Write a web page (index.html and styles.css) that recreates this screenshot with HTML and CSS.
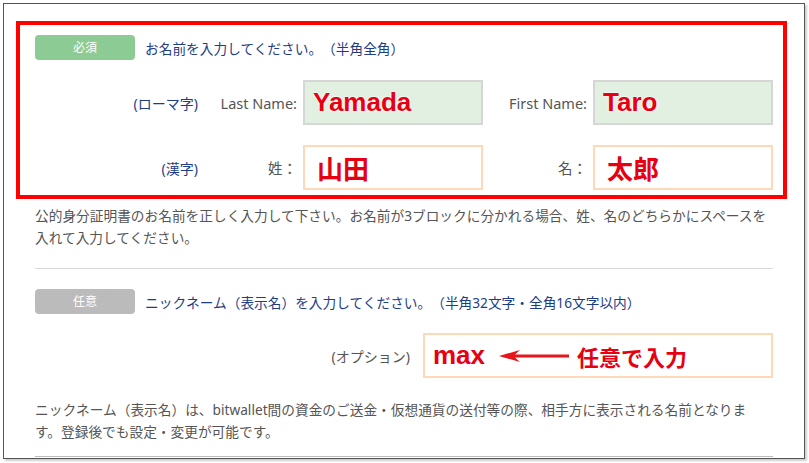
FILE: index.html
```html
<!DOCTYPE html>
<html lang="ja">
<head>
    <meta charset="UTF-8">
    <title>お名前の入力</title>
    <link rel="stylesheet" href="styles.css">
</head>
<body>

    <div class="form-panel">

        <!-- Required: name -->
        <div class="required-box">
            <div class="field-head">
                <span class="badge badge-required">必須</span>
                <span class="field-title">お名前を入力してください。（半角全角）</span>
            </div>

            <div class="name-grid">
                <div class="label label-note">(ローマ字)</div>
                <div class="label label-name">Last Name:</div>
                <div class="input input-roman"><span class="value value-latin">Yamada</span></div>
                <div class="label label-name">First Name:</div>
                <div class="input input-roman"><span class="value value-latin">Taro</span></div>

                <div class="label label-note">(漢字)</div>
                <div class="label label-name">姓：</div>
                <div class="input input-kanji"><span class="value value-kanji">山田</span></div>
                <div class="label label-name">名：</div>
                <div class="input input-kanji"><span class="value value-kanji">太郎</span></div>
            </div>
        </div>

        <p class="help">公的身分証明書のお名前を正しく入力して下さい。お名前が3ブロックに分かれる場合、姓、名のどちらかにスペースを<br>入れて入力してください。</p>

        <hr class="divider">

        <!-- Optional: nickname -->
        <div class="field-head">
            <span class="badge badge-optional">任意</span>
            <span class="field-title">ニックネーム（表示名）を入力してください。（半角32文字・全角16文字以内）</span>
        </div>

        <div class="option-row">
            <div class="label label-option">(オプション)</div>
            <div class="input input-kanji">
                <span class="value value-latin">max</span>
                <svg class="arrow" width="70" height="14" viewBox="0 0 70 14">
                    <path d="M0 7 L21 1 L16 5.5 L70 5.5 L70 8.5 L16 8.5 L21 13 Z" fill="#e8141c"/>
                </svg>
                <span class="hint">任意で入力</span>
            </div>
        </div>

        <p class="help help-nick">ニックネーム（表示名）は、bitwallet間の資金のご送金・仮想通貨の送付等の際、相手方に表示される名前となりま<br>す。登録後でも設定・変更が可能です。</p>

        <hr class="divider divider-bottom">
    </div>

</body>
</html>
```

FILE: styles.css
```css
body {
    margin: 0;
    background-color: #fff;
    font-family: "Noto Sans", "Noto Sans CJK JP", sans-serif;
    color: #555;
    text-spacing-trim: space-all;
}

.form-panel {
    margin: 3px;
    width: 802px;
    height: 456px;
    box-sizing: border-box;
    border: 1px solid #555;
    box-shadow: 2px 2px 2px rgba(0, 0, 0, 0.2);
    padding: 17px 31px 0;
    overflow: hidden;
}

/* red annotation frame round the required field */
.required-box {
    border: 4px solid #ff0000;
    margin: 0 -14px 0 -19px;
    padding: 10px 10px 5px 15px;
}

.field-head {
    display: flex;
    align-items: center;
    gap: 10px;
    height: 25px;
}

.badge {
    width: 100px;
    height: 25px;
    border-radius: 4px;
    color: #fff;
    font-size: 12px;
    line-height: 25px;
    text-align: center;
}

.badge-required {
    background-color: #8ccb93;
}

.badge-optional {
    background-color: #bbb;
}

.field-title {
    font-size: 13.7px;
    color: #1e3d86;
    white-space: nowrap;
}

.name-grid {
    display: grid;
    grid-template-columns: 163px 105px 180px 110px 180px;
    row-gap: 20px;
    margin-top: 20px;
}

.label {
    display: flex;
    align-items: center;
    justify-content: flex-end;
    font-size: 14px;
}

.label-note {
    color: #1e3d86;
}

.label-name {
    padding-right: 6px;
    font-size: 14.5px;
}

.input {
    display: flex;
    align-items: center;
    height: 45px;
    box-sizing: border-box;
    padding-left: 8px;
}

.input-roman {
    background-color: #e1f0e1;
    border: 2px solid #d6d6d6;
}

.input-kanji {
    background-color: #fff;
    border: 2px solid #fdd9b7;
}

.value {
    color: #e60012;
    font-weight: bold;
    text-shadow: 0 0 2px #fff, 0 0 2px #fff;
}

.value-latin {
    font-family: "Liberation Sans", Arial, sans-serif;
    font-size: 26px;
}

.value-kanji {
    font-family: "Noto Sans CJK JP", sans-serif;
    font-size: 26px;
    padding-left: 4px;
}

.help {
    margin: 6px 0 0;
    font-size: 13.7px;
    line-height: 22px;
    color: #555;
    white-space: nowrap;
}

.divider {
    margin: 19px 0 20px;
    border: 0;
    border-top: 1px solid #d9d9d9;
}

.option-row {
    display: grid;
    grid-template-columns: 1fr 350px;
    margin-top: 19px;
}

.label-option {
    padding-right: 13px;
}

.arrow {
    margin-left: 14px;
}

.hint {
    margin-left: 8px;
    color: #e60012;
    font-family: "Noto Sans CJK JP", sans-serif;
    font-size: 22px;
    font-weight: bold;
}

.help-nick {
    margin-top: 21px;
}

.divider-bottom {
    margin: 13px 0 0;
    border-top-color: #bbb;
}
```
